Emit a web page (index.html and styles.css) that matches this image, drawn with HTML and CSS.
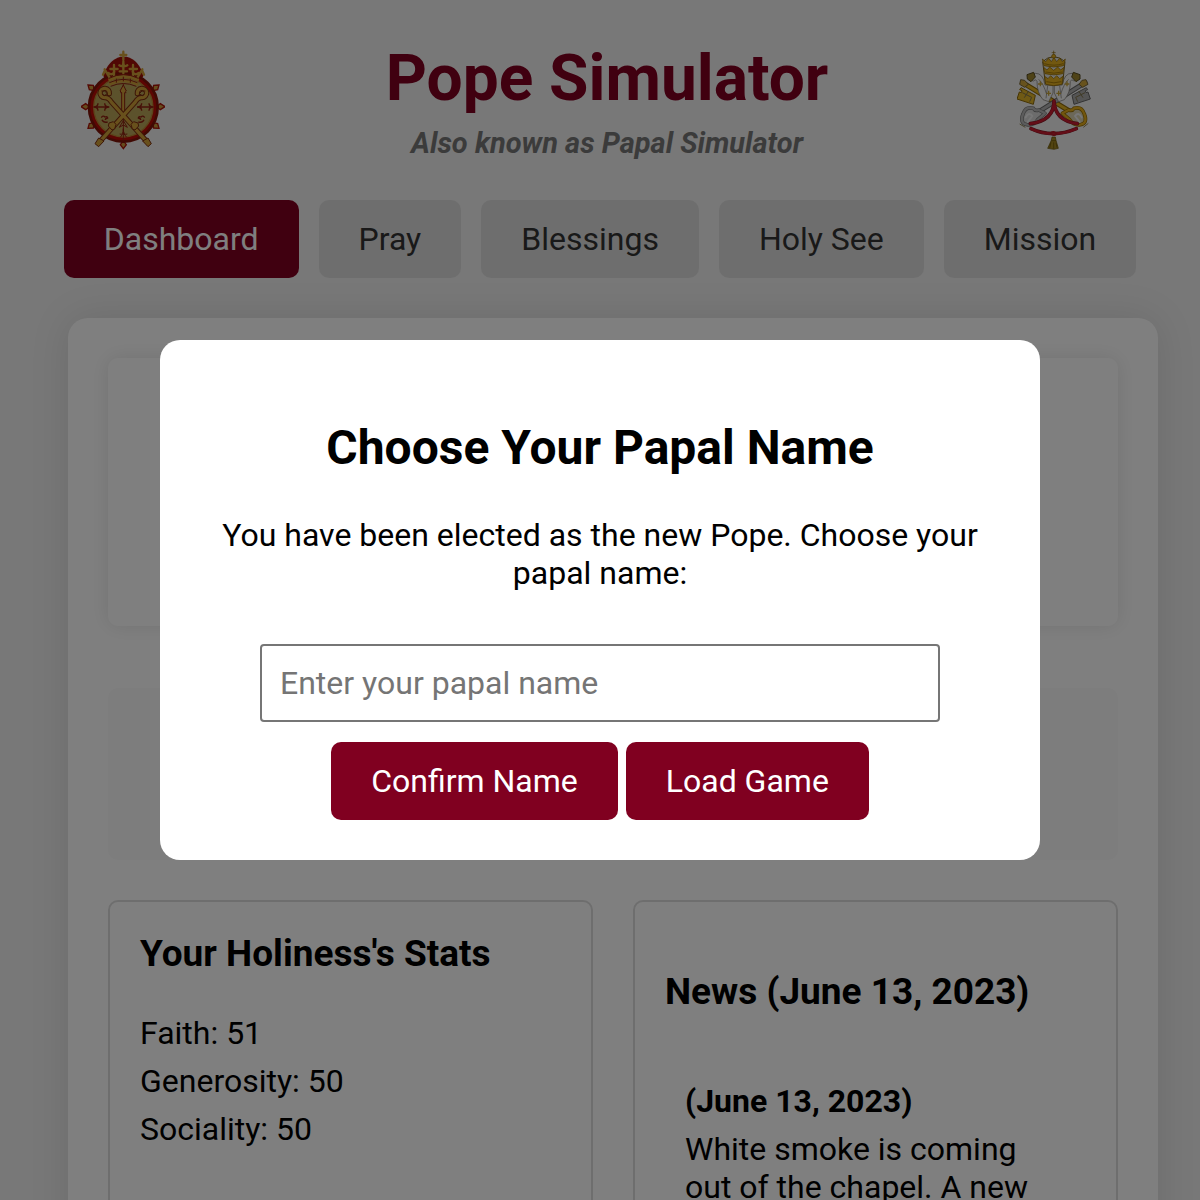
FILE: index.html
```html
<!DOCTYPE html>
<html lang="en">
<head>
<meta charset="utf-8">
<meta name="viewport" content="width=device-width, initial-scale=1">
<title>Pope Simulator</title>
<link rel="stylesheet" href="styles.css">
</head>
<body>
<header class="header">
  <svg class="seal" viewBox="34 30 252 300" aria-hidden="true">
    <g fill="#c8983a" stroke="#a81408" stroke-width="4">
      <path d="M34 200l14-9 12 9-12 9zM260 200l12-9 14 9-14 9zM161 326l-9-12 9-12 9 12zM55 135l16 1 3 16-15-3zM268 135l-16 1-3 16 15-3zM55 265l16-1 3-16-15 3zM268 265l-16-1-3-16 15 3z"/>
    </g>
    <path d="M101 108Q115 60 153 50h18q38 10 50 58l-22 37h-76z" fill="#a01008"/>
    <circle cx="161" cy="202" r="103" fill="#b80c06" stroke="#801408" stroke-width="8"/>
    <circle cx="161" cy="202" r="89" fill="#b8a458" stroke="#b88834" stroke-width="4"/>
    <g fill="none" stroke="#d0a038" stroke-width="7" stroke-linecap="round" stroke-linejoin="round">
      <path d="M161 35v24M152 45h18M161 64v36M149 76q12 8 12-10 0 18 12 10M150 94h22M133 75v35M122 87h22M190 75v35M180 87h22M105 88l18 30M218 88l-18 30M116 99q12 9 18-4M207 99q-12 9-18-4M105 93l-5 11M218 93l5 11"/>
      <path d="M120 119q41-21 84 0M122 132q40-19 80 0" stroke-width="9"/>
    </g>
    <g fill="none" stroke="#8d2010" stroke-width="3">
      <path d="M118 115q43-22 88 0M119 128q42-20 84 0M123 139q38-17 77 0M140 116v12M182 116v12M161 110v14M161 131v170M152 158h18"/>
      <path d="M74 201h42M85 190q0 11-14 11 14 0 14 11M105 190q0 11 14 11-14 0-14 11M205 201h44M216 190q0 11-14 11 14 0 14 11M238 190q0 11 14 11-14 0-14 11" stroke-width="4"/>
      <path d="M95 233q5-8 11-2 8-3 8 3-7 1-7 6M97 239q4 10 17 7M225 233q-5-8-11-2-8-3-8 3 7 1 7 6M223 239q-4 10-17 7" stroke-width="4"/>
      <path d="M161 242l-12 20 12-7 12 7zM150 282q11 5 11-16 0 21 12 16M152 292l9-13 10 13"/>
    </g>
    <path d="M161 135l9 18-5 5v68l-4 6-5-6v-68l-5-5z" fill="#d0a038" stroke="#8d2010" stroke-width="3"/>
    <g fill="none" stroke-linecap="round">
      <path d="M119 161a14 14 0 1 0-14 12q12-1 20 13l103 115M203 161a14 14 0 1 1 14 12q-12-1-20 13L94 301" stroke="#7c2d10" stroke-width="16"/>
      <path d="M119 161a14 14 0 1 0-14 12q12-1 20 13l103 115M203 161a14 14 0 1 1 14 12q-12-1-20 13L94 301" stroke="#d0a038" stroke-width="10"/>
    </g>
    <g fill="#d0a038" stroke="#7c2d10" stroke-width="3" stroke-linejoin="round">
      <path d="M87 294l16 9-16 17-11-9zM235 294l-16 9 16 17 10-9z"/>
      <path d="M118 249l13-4 8 8-4 14-8 3-11-12zM205 249l-13-4-8 8 4 14 8 3 11-12z"/>
      <path d="M95 153h10l8 8-9 6-6-4M227 153h-10l-8 8 9 6 6-4" fill="none"/>
    </g>
  </svg>
  <div class="headline">
    <h1 class="title">Pope Simulator</h1>
    <p class="subtitle">Also known as Papal Simulator</p>
  </div>
  <svg class="arms" viewBox="50 30 222 300" aria-hidden="true">
    <!-- crossed keys -->
    <g fill="none" stroke-linecap="round" stroke-linejoin="round">
      <path d="M67 128l145 88" stroke="#8b6808" stroke-width="15"/>
      <path d="M67 128l145 88" stroke="#e0b020" stroke-width="9"/>
      <path d="M254 128L104 222" stroke="#666" stroke-width="15"/>
      <path d="M254 128L104 222" stroke="#b0b0b0" stroke-width="9"/>
      <path d="M99 205q-23-7-31 17-11 28 12 32 20 3 32-15l22-19-19-10q-11 4-16-5z" fill="#d8d8d8" stroke="#777" stroke-width="11"/>
      <path d="M99 205q-23-7-31 17-11 28 12 32 20 3 32-15l22-19-19-10q-11 4-16-5z" stroke="#b8b8b8" stroke-width="7"/>
      <path d="M221 205q23-7 31 17 11 28-12 32-20 3-32-15l-22-19 19-10q11 4 16-5z" fill="#d8d0b0" stroke="#8c6800" stroke-width="11"/>
      <path d="M221 205q23-7 31 17 11 28-12 32-20 3-32-15l-22-19 19-10q11 4 16-5z" stroke="#e4ac1c" stroke-width="7"/>
      <path d="M76 232q10-18 20-4l-14 18M244 232q-10-18-20-4l14 18" stroke="#eee" stroke-width="6"/>
    </g>
    <!-- lappets of the tiara -->
    <g fill="#f4f4f4" stroke="#77736c" stroke-width="2" stroke-linejoin="round">
      <path d="M134 135Q128 99 105 100q-18 1-24 17l18 6q8-8 11 1 0 35 18 55l17 6 13-26V137zM186 135q6-36 29-35 18 1 24 17l-18 6q-8-8-11 1 0 35-18 55l-17 6-13-26V137z"/>
      <path d="M115 118q14 12 24 45M205 118q-14 12-24 45M142 137l-5 38M178 137l5 38" fill="none"/>
    </g>
    <g stroke-width="3" stroke-linejoin="round">
      <path d="M62 143l43 23-6 27-49-16 7-21 6 2 2-6-7-3z" fill="#e0b428" stroke="#8b6808"/>
      <path d="M258 143l-43 23 6 27 49-16-7-21-6 2-2-6 7-3z" fill="#a8a8a8" stroke="#666"/>
      <path d="M66 158l28 14-6 13M72 173l13-20M254 158l-28 14 6 13M248 173l-13-20" fill="none" stroke="#80744c"/>
      <path d="M61 119l12 2 11 12-11 9-15-9zM257 119l-12 2-9 12 11 9 16-9z" fill="#cfa43a" stroke="#756538"/>
      <path d="M80 104l20-7 5 14-13 14-11-8zM239 104l-20-7-5 14 13 14 12-8z" fill="#9e872e" stroke="#574b20"/>
    </g>
    <!-- cord and tassel -->
    <g fill="none" stroke-linecap="round" stroke-linejoin="round">
      <path d="M161 183q0 59-71 68M161 183q2 59 70 68M92 266q65 30 136 0" stroke="#7b1c26" stroke-width="11"/>
      <path d="M161 183q0 59-71 68M161 183q2 59 70 68M92 266q65 30 136 0" stroke="#c81c30" stroke-width="8"/>
      <path d="M151 279q10-8 17 3-8 9-17-3z" stroke="#b31c2a" stroke-width="5"/>
    </g>
    <path d="M155 291h10l2 10 7 24-13 3-19-3 11-24z" fill="#a48822" stroke="#635008" stroke-width="2"/>
    <path d="M153 302h14M152 307l-4 17M160 307v19M167 308l3 15M58 252l17 10M264 250l-15 12" stroke="#635008" stroke-width="2"/>
    <!-- tiara -->
    <path d="M127 65q14-14 33-15 20 1 34 15l-7 65q-26 11-52 0z" fill="#e2e2dc" stroke="#7b621c" stroke-width="3"/>
    <g fill="#e4b020" stroke="#866000" stroke-width="2" stroke-linejoin="round">
      <path d="M160 32v18M154 38h12"/>
      <circle cx="160" cy="49" r="6"/>
      <path d="M126 57l10 8 9-10 8 10 8-12 8 12 9-10 8 10 9-8-5 20q-30 8-59 0zM130 82l10 8 8-9 12 10 12-10 9 9 10-8-4 19q-26 7-53 0zM133 109l10 7 8-9 9 9 9-9 9 9 10-7-3 24q-25 8-49 0z"/>
      <path d="M132 71q29 9 57 0M136 96q25 7 49 0M138 125q23 7 45 0" fill="none"/>
    </g>
    <g fill="none" stroke="#c7a53b" stroke-width="4">
      <path d="M120 124v15M113 132h14M200 124v15M193 132h14M145 152v15M138 160h14M175 152v15M168 160h14"/>
    </g>
  </svg>
</header>

<nav class="tabs">
  <button class="button" type="button" aria-current="page">Dashboard</button>
  <button class="button tab" type="button">Pray</button>
  <button class="button tab" type="button">Blessings</button>
  <button class="button tab" type="button">Holy See</button>
  <button class="button tab" type="button">Mission</button>
</nav>

<main class="main">
  <section class="scene"></section>
  <section class="actions"></section>
  <div class="columns">
    <section class="card">
      <h3 class="card-title">Your Holiness's Stats</h3>
      <ul class="stats">
        <li>Faith: 51</li>
        <li>Generosity: 50</li>
        <li>Sociality: 50</li>
      </ul>
    </section>
    <section class="card news">
      <h3 class="card-title">News (June 13, 2023)</h3>
      <article class="story">
        <strong>(June 13, 2023)</strong>
        <p class="story-text">White smoke is coming out of the chapel. A new</p>
      </article>
    </section>
  </div>
</main>

<div class="overlay">
  <form class="modal" role="dialog" aria-modal="true" aria-labelledby="modal-title">
    <h2 class="modal-title" id="modal-title">Choose Your Papal Name</h2>
    <label class="prompt" for="papal-name">You have been elected as the new Pope. Choose your papal name:</label>
    <input class="name-input" id="papal-name" type="text" placeholder="Enter your papal name">
    <div class="modal-actions">
      <button class="button" type="button">Confirm Name</button>
      <button class="button" type="button">Load Game</button>
    </div>
  </form>
</div>
</body>
</html>
```

FILE: styles.css
```css
* {
  box-sizing: border-box;
}

body {
  height: 100vh;
  margin: 0;
  overflow: hidden;
  background: #f0f0f0;
  color: #000;
  font: 32px/38px Roboto, sans-serif;
}

h1, h2, h3, p, ul {
  margin: 0;
  padding: 0;
}

.header {
  display: flex;
  align-items: center;
  padding: 40px 109px 40px 81px;
}

.seal {
  flex: none;
  width: 84px;
  height: 100px;
}

.arms {
  flex: none;
  width: 74px;
  height: 100px;
}

.headline {
  flex: 1;
  padding-left: 32px;
  text-align: center;
}

.title {
  color: #800020;
  font-size: 64px;
  line-height: 78px;
}

.subtitle {
  padding-top: 8px;
  color: #777;
  font-size: 29px;
  font-style: italic;
  font-weight: 700;
  line-height: 34px;
}

.tabs {
  display: flex;
  justify-content: center;
  gap: 20px;
}

.button {
  padding: 20px 40px;
  border: 0;
  border-radius: 10px;
  background: #800020;
  color: #fff;
  font: inherit;
  cursor: pointer;
}

.tab {
  background: #ddd;
  color: #333;
}

.main {
  margin: 40px 42px 40px 68px;
  padding: 40px;
  border-radius: 20px;
  background: #fff;
  box-shadow: 0 0 40px rgba(0, 0, 0, 0.1);
}

.scene {
  min-height: 268px;
  border-radius: 10px;
  box-shadow: 0 0 20px rgba(0, 0, 0, 0.1);
}

.actions {
  min-height: 172px;
  margin: 62px 0 40px;
  border-radius: 10px;
  background: #fafafa;
}

.columns {
  display: grid;
  grid-template-columns: 1fr 1fr;
  gap: 40px;
}

.card {
  min-height: 400px;
  padding: 30px;
  border: 2px solid #ddd;
  border-radius: 10px;
}

.card-title {
  font-size: 37px;
  line-height: 44px;
}

.stats {
  padding-top: 33px;
  line-height: 48px;
  list-style: none;
}

.news {
  padding-top: 68px;
}

.story {
  padding: 68px 20px 20px;
}

.story-text {
  padding-top: 10px;
}

.overlay {
  position: fixed;
  inset: 0;
  display: flex;
  align-items: center;
  justify-content: center;
  padding: 20px;
  background: rgba(0, 0, 0, 0.5);
}

.modal {
  width: 100%;
  max-width: 880px;
  padding: 40px;
  border-radius: 20px;
  background: #fff;
  text-align: center;
}

.modal-title {
  margin: 40px 0;
  font-size: 48px;
  line-height: 56px;
}

.prompt {
  display: block;
}

.name-input {
  width: 85%;
  height: 78px;
  margin: 52px 0 20px;
  padding: 18px;
  border: 2px solid #767676;
  border-radius: 4px;
  background: #fff;
  font: inherit;
  vertical-align: top;
}

.name-input::placeholder {
  color: #757575;
}

.modal-actions {
  display: flex;
  justify-content: center;
  gap: 8px;
}
```
